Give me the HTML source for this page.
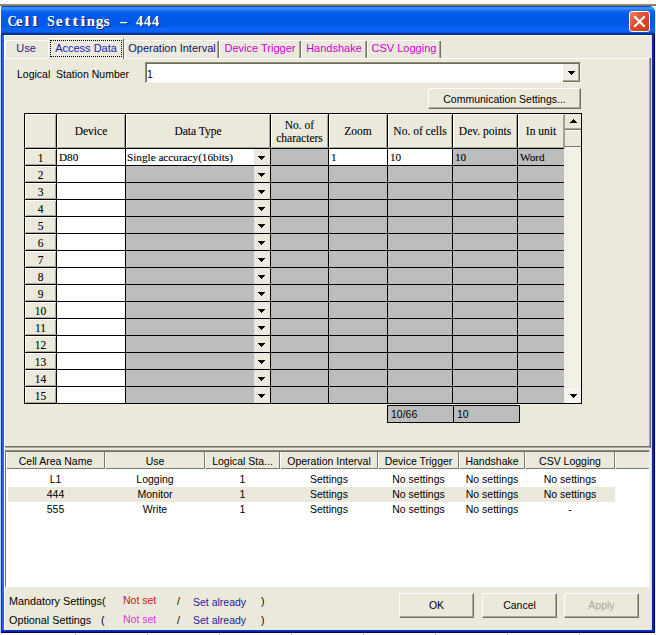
<!DOCTYPE html>
<html><head><meta charset="utf-8"><style>
*{margin:0;padding:0;box-sizing:border-box}
html,body{width:656px;height:635px;overflow:hidden;background:#fbfaf6;position:relative}
body{font-family:"Liberation Sans",sans-serif;font-size:10.5px;color:#000;line-height:1}
.a{position:absolute}
.t{white-space:pre;line-height:12px}
.sf{font-family:"Liberation Serif",serif;font-size:11.5px;-webkit-text-stroke:0.1px #000}
.c{text-align:center}
.tri,.trup{position:absolute;width:7px;height:4px}
.tri{background:linear-gradient(#000,#000) 0 0/7px 1px no-repeat,linear-gradient(#000,#000) 1px 1px/5px 1px no-repeat,linear-gradient(#000,#000) 2px 2px/3px 1px no-repeat,linear-gradient(#000,#000) 3px 3px/1px 1px no-repeat}
.trup{background:linear-gradient(#000,#000) 0 3px/7px 1px no-repeat,linear-gradient(#000,#000) 1px 2px/5px 1px no-repeat,linear-gradient(#000,#000) 2px 1px/3px 1px no-repeat,linear-gradient(#000,#000) 3px 0/1px 1px no-repeat}
</style></head><body>
<div class="a " style="left:0px;top:0px;width:656px;height:4px;background:#fdfbfd"></div>
<div class="a " style="left:0px;top:4px;width:656px;height:2px;background:linear-gradient(#a39680,#7c7058)"></div>
<div class="a " style="left:1px;top:6px;width:654px;height:627px;background:#1e62ff;border-radius:2px 6px 0 0"></div>
<div class="a " style="left:1px;top:6px;width:654px;height:29px;border-radius:2px 6px 0 0;background:linear-gradient(#0b45c8 0,#0b45c8 1px,#3d95ff 1px,#3a8efc 3px,#1c74f4 4px,#0660ec 7px,#005ae8 11px,#0058e6 20px,#0864f6 22px,#0a62f2 26px,#0840b8 27px,#0a2a80 28px,#0a2a80 29px)"></div>
<div class="a " style="left:0px;top:35px;width:1px;height:598px;background:#c0d4ff"></div>
<div class="a " style="left:1px;top:35px;width:1px;height:596px;background:#0a3aa8"></div>
<div class="a " style="left:651px;top:35px;width:1px;height:595px;background:#d8def4"></div>
<div class="a " style="left:652px;top:35px;width:2px;height:597px;background:#0a2aa0"></div>
<div class="a " style="left:654px;top:35px;width:1px;height:598px;background:#000060"></div>
<div class="a " style="left:655px;top:6px;width:1px;height:629px;background:#f8f0ff"></div>
<div class="a " style="left:1px;top:630px;width:654px;height:2px;background:linear-gradient(#0838d8,#0020a0)"></div>
<div class="a " style="left:1px;top:632px;width:654px;height:1px;background:#000050"></div>
<div class="a " style="left:0px;top:633px;width:656px;height:2px;background:#fdfdfd"></div>
<div class="a" style="left:7px;top:14px;white-space:nowrap;font-family:'Liberation Serif',serif;font-weight:bold;font-size:14px;line-height:16px;color:#fff;text-shadow:1px 1px 0 #0b2a8a"><span style="display:inline-block;width:8px;text-align:center"><span style="display:inline-block;transform:scaleX(0.92)">C</span></span><span style="display:inline-block;width:8px;text-align:center"><span style="display:inline-block;transform:scaleX(1.1)">e</span></span><span style="display:inline-block;width:8px;text-align:center"><span style="display:inline-block;transform:scaleX(1.35)">l</span></span><span style="display:inline-block;width:8px;text-align:center"><span style="display:inline-block;transform:scaleX(1.35)">l</span></span><span style="display:inline-block;width:8px;text-align:center"><span style="display:inline-block;transform:scaleX(1.1)">&nbsp;</span></span><span style="display:inline-block;width:8px;text-align:center"><span style="display:inline-block;transform:scaleX(1.0)">S</span></span><span style="display:inline-block;width:8px;text-align:center"><span style="display:inline-block;transform:scaleX(1.1)">e</span></span><span style="display:inline-block;width:8px;text-align:center"><span style="display:inline-block;transform:scaleX(1.3)">t</span></span><span style="display:inline-block;width:8px;text-align:center"><span style="display:inline-block;transform:scaleX(1.3)">t</span></span><span style="display:inline-block;width:8px;text-align:center"><span style="display:inline-block;transform:scaleX(1.35)">i</span></span><span style="display:inline-block;width:8px;text-align:center"><span style="display:inline-block;transform:scaleX(1.05)">n</span></span><span style="display:inline-block;width:8px;text-align:center"><span style="display:inline-block;transform:scaleX(1.1)">g</span></span><span style="display:inline-block;width:8px;text-align:center"><span style="display:inline-block;transform:scaleX(1.15)">s</span></span><span style="display:inline-block;width:8px;text-align:center"><span style="display:inline-block;transform:scaleX(1.1)">&nbsp;</span></span><span style="display:inline-block;width:8px;text-align:center"><span style="display:inline-block;transform:scaleX(1.9)">-</span></span><span style="display:inline-block;width:8px;text-align:center"><span style="display:inline-block;transform:scaleX(1.1)">&nbsp;</span></span><span style="display:inline-block;width:8px;text-align:center"><span style="display:inline-block;transform:scaleX(1.05)">4</span></span><span style="display:inline-block;width:8px;text-align:center"><span style="display:inline-block;transform:scaleX(1.05)">4</span></span><span style="display:inline-block;width:8px;text-align:center"><span style="display:inline-block;transform:scaleX(1.05)">4</span></span></div>
<div class="a " style="left:629px;top:11px;width:21px;height:21px;border:1px solid #fff;border-radius:3px;background:linear-gradient(135deg,#f08060,#e04c2c 45%,#c83c1a)"></div>
<svg class="a" style="left:629px;top:11px" width="21" height="21"><path d="M6 6L15 15M15 6L6 15" stroke="#fff" stroke-width="2.2" stroke-linecap="square"/></svg>
<div class="a " style="left:4px;top:35px;width:647px;height:595px;background:#ebe9db"></div>
<div class="a " style="left:4px;top:35px;width:647px;height:1px;background:#fff"></div>
<div class="a " style="left:4px;top:35px;width:1px;height:595px;background:#fff"></div>
<div class="a " style="left:4px;top:58px;width:646px;height:1px;background:#fff"></div>
<div class="a " style="left:649px;top:58px;width:1px;height:389px;background:#aca899"></div>
<div class="a " style="left:650px;top:58px;width:1px;height:390px;background:#716f64"></div>
<div class="a " style="left:5px;top:446px;width:645px;height:1px;background:#716f64"></div>
<div class="a " style="left:5px;top:447px;width:645px;height:1px;background:#aca899"></div>
<div class="a " style="left:5px;top:40px;width:42px;height:18px;border-left:1px solid #fff;border-top:1px solid #fff"></div>
<div class="a t c" style="left:5px;top:42px;width:42px;color:#1c1c8c;font-size:11px">Use</div>
<div class="a " style="left:48px;top:38px;width:76px;height:21px;background:#ebe9db;border-left:1px solid #fff;border-top:1px solid #fff;border-right:1px solid #716f64"></div>
<div class="a " style="left:50px;top:40px;width:72px;height:17px;border:1px dotted #000"></div>
<div class="a t c" style="left:48px;top:42px;width:76px;color:#2020b0;font-size:11px">Access Data</div>
<div class="a " style="left:125px;top:40px;width:94px;height:18px;border-left:1px solid #fff;border-top:1px solid #fff"></div>
<div class="a " style="left:217px;top:41px;width:1px;height:17px;background:#aca899"></div>
<div class="a " style="left:218px;top:41px;width:1px;height:17px;background:#716f64"></div>
<div class="a t c" style="left:125px;top:42px;width:94px;color:#101070;font-size:11px">Operation Interval</div>
<div class="a " style="left:219px;top:40px;width:82px;height:18px;border-left:1px solid #fff;border-top:1px solid #fff"></div>
<div class="a " style="left:299px;top:41px;width:1px;height:17px;background:#aca899"></div>
<div class="a " style="left:300px;top:41px;width:1px;height:17px;background:#716f64"></div>
<div class="a t c" style="left:219px;top:42px;width:82px;color:#d000d0;font-size:11px">Device Trigger</div>
<div class="a " style="left:301px;top:40px;width:66px;height:18px;border-left:1px solid #fff;border-top:1px solid #fff"></div>
<div class="a " style="left:365px;top:41px;width:1px;height:17px;background:#aca899"></div>
<div class="a " style="left:366px;top:41px;width:1px;height:17px;background:#716f64"></div>
<div class="a t c" style="left:301px;top:42px;width:66px;color:#d000d0;font-size:11px">Handshake</div>
<div class="a " style="left:367px;top:40px;width:74px;height:18px;border-left:1px solid #fff;border-top:1px solid #fff"></div>
<div class="a " style="left:439px;top:41px;width:1px;height:17px;background:#aca899"></div>
<div class="a " style="left:440px;top:41px;width:1px;height:17px;background:#716f64"></div>
<div class="a t c" style="left:367px;top:42px;width:74px;color:#d000d0;font-size:11px">CSV Logging</div>
<div class="a t " style="left:17px;top:68px;">Logical  Station Number</div>
<div class="a " style="left:145px;top:62px;width:436px;height:21px;background:#fff;border-left:1px solid #8d8a7d;border-top:1px solid #8d8a7d;border-right:1px solid #f4f2ea;border-bottom:1px solid #f4f2ea"></div>
<div class="a " style="left:146px;top:63px;width:434px;height:1px;background:#6f6c60"></div>
<div class="a " style="left:146px;top:63px;width:1px;height:19px;background:#6f6c60"></div>
<div class="a t " style="left:147px;top:68px;">1</div>
<div class="a " style="left:563px;top:64px;width:17px;height:18px;background:#f0eee4;border-right:1px solid #716f64;border-bottom:1px solid #716f64;box-shadow:inset -1px -1px 0 #aca899"></div>
<div class="tri" style="left:568px;top:71px"></div>
<div class="a " style="left:428px;top:88px;width:153px;height:21px;background:#ebe9db;border-left:1px solid #fff;border-top:1px solid #fff;border-right:1px solid #716f64;border-bottom:1px solid #716f64;box-shadow:inset -1px -1px 0 #aca899"></div>
<div class="a t c" style="left:428px;top:93px;width:153px">Communication Settings...</div>
<div class="a " style="left:24px;top:113px;width:558px;height:291px;background:#000"></div>
<div class="a " style="left:25px;top:114px;width:31px;height:34px;background:#ebe9db;box-shadow:inset 1px 1px 0 #fff,inset -1px -1px 0 #aca899"></div>
<div class="a " style="left:57px;top:114px;width:68px;height:34px;background:#ebe9db;box-shadow:inset 1px 1px 0 #fff,inset -1px -1px 0 #aca899"></div>
<div class="a sf c" style="left:57px;top:125px;width:68px;line-height:13px">Device</div>
<div class="a " style="left:126px;top:114px;width:144px;height:34px;background:#ebe9db;box-shadow:inset 1px 1px 0 #fff,inset -1px -1px 0 #aca899"></div>
<div class="a sf c" style="left:126px;top:125px;width:144px;line-height:13px">Data Type</div>
<div class="a " style="left:271px;top:114px;width:57px;height:34px;background:#ebe9db;box-shadow:inset 1px 1px 0 #fff,inset -1px -1px 0 #aca899"></div>
<div class="a sf c" style="left:271px;top:119px;width:57px;line-height:13px">No. of<br>characters</div>
<div class="a " style="left:329px;top:114px;width:58px;height:34px;background:#ebe9db;box-shadow:inset 1px 1px 0 #fff,inset -1px -1px 0 #aca899"></div>
<div class="a sf c" style="left:329px;top:125px;width:58px;line-height:13px">Zoom</div>
<div class="a " style="left:388px;top:114px;width:64px;height:34px;background:#ebe9db;box-shadow:inset 1px 1px 0 #fff,inset -1px -1px 0 #aca899"></div>
<div class="a sf c" style="left:388px;top:125px;width:64px;line-height:13px">No. of cells</div>
<div class="a " style="left:453px;top:114px;width:64px;height:34px;background:#ebe9db;box-shadow:inset 1px 1px 0 #fff,inset -1px -1px 0 #aca899"></div>
<div class="a sf c" style="left:453px;top:125px;width:64px;line-height:13px">Dev. points</div>
<div class="a " style="left:518px;top:114px;width:46px;height:34px;background:#ebe9db;box-shadow:inset 1px 1px 0 #fff,inset -1px -1px 0 #aca899"></div>
<div class="a sf c" style="left:518px;top:125px;width:46px;line-height:13px">In unit</div>
<div class="a " style="left:25px;top:149px;width:31px;height:16px;background:#ebe9db;box-shadow:inset 1px 1px 0 #fff,inset -1px -1px 0 #aca899"></div>
<div class="a sf c" style="left:25px;top:152px;width:31px;line-height:13px">1</div>
<div class="a " style="left:57px;top:149px;width:68px;height:16px;background:#fff"></div>
<div class="a " style="left:126px;top:149px;width:144px;height:16px;background:#fff"></div>
<div class="a " style="left:254px;top:149px;width:16px;height:16px;background:#ebe9db"></div>
<div class="tri" style="left:258px;top:156px"></div>
<div class="a " style="left:271px;top:149px;width:57px;height:16px;background:#bdbdbd"></div>
<div class="a " style="left:329px;top:149px;width:58px;height:16px;background:#fff"></div>
<div class="a " style="left:388px;top:149px;width:64px;height:16px;background:#fff"></div>
<div class="a " style="left:453px;top:149px;width:64px;height:16px;background:#bdbdbd"></div>
<div class="a " style="left:518px;top:149px;width:46px;height:16px;background:#bdbdbd"></div>
<div class="a sf t" style="left:59px;top:151px;line-height:13px;font-size:11.2px">D80</div>
<div class="a sf t" style="left:127px;top:151px;line-height:13px;font-size:11.2px">Single accuracy(16bits)</div>
<div class="a sf t" style="left:331px;top:151px;line-height:13px;font-size:11.2px">1</div>
<div class="a sf t" style="left:390px;top:151px;line-height:13px;font-size:11.2px">10</div>
<div class="a sf t" style="left:455px;top:151px;line-height:13px;font-size:11.2px">10</div>
<div class="a sf t" style="left:520px;top:151px;line-height:13px;font-size:11.2px">Word</div>
<div class="a " style="left:25px;top:166px;width:31px;height:16px;background:#ebe9db;box-shadow:inset 1px 1px 0 #fff,inset -1px -1px 0 #aca899"></div>
<div class="a sf c" style="left:25px;top:169px;width:31px;line-height:13px">2</div>
<div class="a " style="left:57px;top:166px;width:68px;height:16px;background:#fff"></div>
<div class="a " style="left:126px;top:166px;width:144px;height:16px;background:#bdbdbd"></div>
<div class="a " style="left:254px;top:166px;width:16px;height:16px;background:#ebe9db"></div>
<div class="tri" style="left:258px;top:173px"></div>
<div class="a " style="left:271px;top:166px;width:57px;height:16px;background:#bdbdbd"></div>
<div class="a " style="left:329px;top:166px;width:58px;height:16px;background:#bdbdbd"></div>
<div class="a " style="left:388px;top:166px;width:64px;height:16px;background:#bdbdbd"></div>
<div class="a " style="left:453px;top:166px;width:64px;height:16px;background:#bdbdbd"></div>
<div class="a " style="left:518px;top:166px;width:46px;height:16px;background:#bdbdbd"></div>
<div class="a " style="left:25px;top:183px;width:31px;height:16px;background:#ebe9db;box-shadow:inset 1px 1px 0 #fff,inset -1px -1px 0 #aca899"></div>
<div class="a sf c" style="left:25px;top:186px;width:31px;line-height:13px">3</div>
<div class="a " style="left:57px;top:183px;width:68px;height:16px;background:#fff"></div>
<div class="a " style="left:126px;top:183px;width:144px;height:16px;background:#bdbdbd"></div>
<div class="a " style="left:254px;top:183px;width:16px;height:16px;background:#ebe9db"></div>
<div class="tri" style="left:258px;top:190px"></div>
<div class="a " style="left:271px;top:183px;width:57px;height:16px;background:#bdbdbd"></div>
<div class="a " style="left:329px;top:183px;width:58px;height:16px;background:#bdbdbd"></div>
<div class="a " style="left:388px;top:183px;width:64px;height:16px;background:#bdbdbd"></div>
<div class="a " style="left:453px;top:183px;width:64px;height:16px;background:#bdbdbd"></div>
<div class="a " style="left:518px;top:183px;width:46px;height:16px;background:#bdbdbd"></div>
<div class="a " style="left:25px;top:200px;width:31px;height:16px;background:#ebe9db;box-shadow:inset 1px 1px 0 #fff,inset -1px -1px 0 #aca899"></div>
<div class="a sf c" style="left:25px;top:203px;width:31px;line-height:13px">4</div>
<div class="a " style="left:57px;top:200px;width:68px;height:16px;background:#fff"></div>
<div class="a " style="left:126px;top:200px;width:144px;height:16px;background:#bdbdbd"></div>
<div class="a " style="left:254px;top:200px;width:16px;height:16px;background:#ebe9db"></div>
<div class="tri" style="left:258px;top:207px"></div>
<div class="a " style="left:271px;top:200px;width:57px;height:16px;background:#bdbdbd"></div>
<div class="a " style="left:329px;top:200px;width:58px;height:16px;background:#bdbdbd"></div>
<div class="a " style="left:388px;top:200px;width:64px;height:16px;background:#bdbdbd"></div>
<div class="a " style="left:453px;top:200px;width:64px;height:16px;background:#bdbdbd"></div>
<div class="a " style="left:518px;top:200px;width:46px;height:16px;background:#bdbdbd"></div>
<div class="a " style="left:25px;top:217px;width:31px;height:16px;background:#ebe9db;box-shadow:inset 1px 1px 0 #fff,inset -1px -1px 0 #aca899"></div>
<div class="a sf c" style="left:25px;top:220px;width:31px;line-height:13px">5</div>
<div class="a " style="left:57px;top:217px;width:68px;height:16px;background:#fff"></div>
<div class="a " style="left:126px;top:217px;width:144px;height:16px;background:#bdbdbd"></div>
<div class="a " style="left:254px;top:217px;width:16px;height:16px;background:#ebe9db"></div>
<div class="tri" style="left:258px;top:224px"></div>
<div class="a " style="left:271px;top:217px;width:57px;height:16px;background:#bdbdbd"></div>
<div class="a " style="left:329px;top:217px;width:58px;height:16px;background:#bdbdbd"></div>
<div class="a " style="left:388px;top:217px;width:64px;height:16px;background:#bdbdbd"></div>
<div class="a " style="left:453px;top:217px;width:64px;height:16px;background:#bdbdbd"></div>
<div class="a " style="left:518px;top:217px;width:46px;height:16px;background:#bdbdbd"></div>
<div class="a " style="left:25px;top:234px;width:31px;height:16px;background:#ebe9db;box-shadow:inset 1px 1px 0 #fff,inset -1px -1px 0 #aca899"></div>
<div class="a sf c" style="left:25px;top:237px;width:31px;line-height:13px">6</div>
<div class="a " style="left:57px;top:234px;width:68px;height:16px;background:#fff"></div>
<div class="a " style="left:126px;top:234px;width:144px;height:16px;background:#bdbdbd"></div>
<div class="a " style="left:254px;top:234px;width:16px;height:16px;background:#ebe9db"></div>
<div class="tri" style="left:258px;top:241px"></div>
<div class="a " style="left:271px;top:234px;width:57px;height:16px;background:#bdbdbd"></div>
<div class="a " style="left:329px;top:234px;width:58px;height:16px;background:#bdbdbd"></div>
<div class="a " style="left:388px;top:234px;width:64px;height:16px;background:#bdbdbd"></div>
<div class="a " style="left:453px;top:234px;width:64px;height:16px;background:#bdbdbd"></div>
<div class="a " style="left:518px;top:234px;width:46px;height:16px;background:#bdbdbd"></div>
<div class="a " style="left:25px;top:251px;width:31px;height:16px;background:#ebe9db;box-shadow:inset 1px 1px 0 #fff,inset -1px -1px 0 #aca899"></div>
<div class="a sf c" style="left:25px;top:254px;width:31px;line-height:13px">7</div>
<div class="a " style="left:57px;top:251px;width:68px;height:16px;background:#fff"></div>
<div class="a " style="left:126px;top:251px;width:144px;height:16px;background:#bdbdbd"></div>
<div class="a " style="left:254px;top:251px;width:16px;height:16px;background:#ebe9db"></div>
<div class="tri" style="left:258px;top:258px"></div>
<div class="a " style="left:271px;top:251px;width:57px;height:16px;background:#bdbdbd"></div>
<div class="a " style="left:329px;top:251px;width:58px;height:16px;background:#bdbdbd"></div>
<div class="a " style="left:388px;top:251px;width:64px;height:16px;background:#bdbdbd"></div>
<div class="a " style="left:453px;top:251px;width:64px;height:16px;background:#bdbdbd"></div>
<div class="a " style="left:518px;top:251px;width:46px;height:16px;background:#bdbdbd"></div>
<div class="a " style="left:25px;top:268px;width:31px;height:16px;background:#ebe9db;box-shadow:inset 1px 1px 0 #fff,inset -1px -1px 0 #aca899"></div>
<div class="a sf c" style="left:25px;top:271px;width:31px;line-height:13px">8</div>
<div class="a " style="left:57px;top:268px;width:68px;height:16px;background:#fff"></div>
<div class="a " style="left:126px;top:268px;width:144px;height:16px;background:#bdbdbd"></div>
<div class="a " style="left:254px;top:268px;width:16px;height:16px;background:#ebe9db"></div>
<div class="tri" style="left:258px;top:275px"></div>
<div class="a " style="left:271px;top:268px;width:57px;height:16px;background:#bdbdbd"></div>
<div class="a " style="left:329px;top:268px;width:58px;height:16px;background:#bdbdbd"></div>
<div class="a " style="left:388px;top:268px;width:64px;height:16px;background:#bdbdbd"></div>
<div class="a " style="left:453px;top:268px;width:64px;height:16px;background:#bdbdbd"></div>
<div class="a " style="left:518px;top:268px;width:46px;height:16px;background:#bdbdbd"></div>
<div class="a " style="left:25px;top:285px;width:31px;height:16px;background:#ebe9db;box-shadow:inset 1px 1px 0 #fff,inset -1px -1px 0 #aca899"></div>
<div class="a sf c" style="left:25px;top:288px;width:31px;line-height:13px">9</div>
<div class="a " style="left:57px;top:285px;width:68px;height:16px;background:#fff"></div>
<div class="a " style="left:126px;top:285px;width:144px;height:16px;background:#bdbdbd"></div>
<div class="a " style="left:254px;top:285px;width:16px;height:16px;background:#ebe9db"></div>
<div class="tri" style="left:258px;top:292px"></div>
<div class="a " style="left:271px;top:285px;width:57px;height:16px;background:#bdbdbd"></div>
<div class="a " style="left:329px;top:285px;width:58px;height:16px;background:#bdbdbd"></div>
<div class="a " style="left:388px;top:285px;width:64px;height:16px;background:#bdbdbd"></div>
<div class="a " style="left:453px;top:285px;width:64px;height:16px;background:#bdbdbd"></div>
<div class="a " style="left:518px;top:285px;width:46px;height:16px;background:#bdbdbd"></div>
<div class="a " style="left:25px;top:302px;width:31px;height:16px;background:#ebe9db;box-shadow:inset 1px 1px 0 #fff,inset -1px -1px 0 #aca899"></div>
<div class="a sf c" style="left:25px;top:305px;width:31px;line-height:13px">10</div>
<div class="a " style="left:57px;top:302px;width:68px;height:16px;background:#fff"></div>
<div class="a " style="left:126px;top:302px;width:144px;height:16px;background:#bdbdbd"></div>
<div class="a " style="left:254px;top:302px;width:16px;height:16px;background:#ebe9db"></div>
<div class="tri" style="left:258px;top:309px"></div>
<div class="a " style="left:271px;top:302px;width:57px;height:16px;background:#bdbdbd"></div>
<div class="a " style="left:329px;top:302px;width:58px;height:16px;background:#bdbdbd"></div>
<div class="a " style="left:388px;top:302px;width:64px;height:16px;background:#bdbdbd"></div>
<div class="a " style="left:453px;top:302px;width:64px;height:16px;background:#bdbdbd"></div>
<div class="a " style="left:518px;top:302px;width:46px;height:16px;background:#bdbdbd"></div>
<div class="a " style="left:25px;top:319px;width:31px;height:16px;background:#ebe9db;box-shadow:inset 1px 1px 0 #fff,inset -1px -1px 0 #aca899"></div>
<div class="a sf c" style="left:25px;top:322px;width:31px;line-height:13px">11</div>
<div class="a " style="left:57px;top:319px;width:68px;height:16px;background:#fff"></div>
<div class="a " style="left:126px;top:319px;width:144px;height:16px;background:#bdbdbd"></div>
<div class="a " style="left:254px;top:319px;width:16px;height:16px;background:#ebe9db"></div>
<div class="tri" style="left:258px;top:326px"></div>
<div class="a " style="left:271px;top:319px;width:57px;height:16px;background:#bdbdbd"></div>
<div class="a " style="left:329px;top:319px;width:58px;height:16px;background:#bdbdbd"></div>
<div class="a " style="left:388px;top:319px;width:64px;height:16px;background:#bdbdbd"></div>
<div class="a " style="left:453px;top:319px;width:64px;height:16px;background:#bdbdbd"></div>
<div class="a " style="left:518px;top:319px;width:46px;height:16px;background:#bdbdbd"></div>
<div class="a " style="left:25px;top:336px;width:31px;height:16px;background:#ebe9db;box-shadow:inset 1px 1px 0 #fff,inset -1px -1px 0 #aca899"></div>
<div class="a sf c" style="left:25px;top:339px;width:31px;line-height:13px">12</div>
<div class="a " style="left:57px;top:336px;width:68px;height:16px;background:#fff"></div>
<div class="a " style="left:126px;top:336px;width:144px;height:16px;background:#bdbdbd"></div>
<div class="a " style="left:254px;top:336px;width:16px;height:16px;background:#ebe9db"></div>
<div class="tri" style="left:258px;top:343px"></div>
<div class="a " style="left:271px;top:336px;width:57px;height:16px;background:#bdbdbd"></div>
<div class="a " style="left:329px;top:336px;width:58px;height:16px;background:#bdbdbd"></div>
<div class="a " style="left:388px;top:336px;width:64px;height:16px;background:#bdbdbd"></div>
<div class="a " style="left:453px;top:336px;width:64px;height:16px;background:#bdbdbd"></div>
<div class="a " style="left:518px;top:336px;width:46px;height:16px;background:#bdbdbd"></div>
<div class="a " style="left:25px;top:353px;width:31px;height:16px;background:#ebe9db;box-shadow:inset 1px 1px 0 #fff,inset -1px -1px 0 #aca899"></div>
<div class="a sf c" style="left:25px;top:356px;width:31px;line-height:13px">13</div>
<div class="a " style="left:57px;top:353px;width:68px;height:16px;background:#fff"></div>
<div class="a " style="left:126px;top:353px;width:144px;height:16px;background:#bdbdbd"></div>
<div class="a " style="left:254px;top:353px;width:16px;height:16px;background:#ebe9db"></div>
<div class="tri" style="left:258px;top:360px"></div>
<div class="a " style="left:271px;top:353px;width:57px;height:16px;background:#bdbdbd"></div>
<div class="a " style="left:329px;top:353px;width:58px;height:16px;background:#bdbdbd"></div>
<div class="a " style="left:388px;top:353px;width:64px;height:16px;background:#bdbdbd"></div>
<div class="a " style="left:453px;top:353px;width:64px;height:16px;background:#bdbdbd"></div>
<div class="a " style="left:518px;top:353px;width:46px;height:16px;background:#bdbdbd"></div>
<div class="a " style="left:25px;top:370px;width:31px;height:16px;background:#ebe9db;box-shadow:inset 1px 1px 0 #fff,inset -1px -1px 0 #aca899"></div>
<div class="a sf c" style="left:25px;top:373px;width:31px;line-height:13px">14</div>
<div class="a " style="left:57px;top:370px;width:68px;height:16px;background:#fff"></div>
<div class="a " style="left:126px;top:370px;width:144px;height:16px;background:#bdbdbd"></div>
<div class="a " style="left:254px;top:370px;width:16px;height:16px;background:#ebe9db"></div>
<div class="tri" style="left:258px;top:377px"></div>
<div class="a " style="left:271px;top:370px;width:57px;height:16px;background:#bdbdbd"></div>
<div class="a " style="left:329px;top:370px;width:58px;height:16px;background:#bdbdbd"></div>
<div class="a " style="left:388px;top:370px;width:64px;height:16px;background:#bdbdbd"></div>
<div class="a " style="left:453px;top:370px;width:64px;height:16px;background:#bdbdbd"></div>
<div class="a " style="left:518px;top:370px;width:46px;height:16px;background:#bdbdbd"></div>
<div class="a " style="left:25px;top:387px;width:31px;height:16px;background:#ebe9db;box-shadow:inset 1px 1px 0 #fff,inset -1px -1px 0 #aca899"></div>
<div class="a sf c" style="left:25px;top:390px;width:31px;line-height:13px">15</div>
<div class="a " style="left:57px;top:387px;width:68px;height:16px;background:#fff"></div>
<div class="a " style="left:126px;top:387px;width:144px;height:16px;background:#bdbdbd"></div>
<div class="a " style="left:254px;top:387px;width:16px;height:16px;background:#ebe9db"></div>
<div class="tri" style="left:258px;top:394px"></div>
<div class="a " style="left:271px;top:387px;width:57px;height:16px;background:#bdbdbd"></div>
<div class="a " style="left:329px;top:387px;width:58px;height:16px;background:#bdbdbd"></div>
<div class="a " style="left:388px;top:387px;width:64px;height:16px;background:#bdbdbd"></div>
<div class="a " style="left:453px;top:387px;width:64px;height:16px;background:#bdbdbd"></div>
<div class="a " style="left:518px;top:387px;width:46px;height:16px;background:#bdbdbd"></div>
<div class="a " style="left:564px;top:114px;width:17px;height:289px;background-color:#f4f3ee;background-image:repeating-conic-gradient(#fbfaf6 0 25%,#e9e6d6 0 50%);background-size:2px 2px"></div>
<div class="a " style="left:564px;top:114px;width:1px;height:34px;background:#9c998c"></div>
<div class="a " style="left:565px;top:114px;width:16px;height:15px;background:#ebe9db"></div>
<div class="a " style="left:565px;top:128px;width:16px;height:1px;background:#aca899"></div>
<div class="a " style="left:565px;top:129px;width:16px;height:1px;background:#7d7a6d"></div>
<div class="trup" style="left:570px;top:119px"></div>
<div class="a " style="left:565px;top:130px;width:16px;height:17px;background:#ebe9db;box-shadow:inset 0 1px 0 #fff,inset 0 -1px 0 #7d7a6d"></div>
<div class="a " style="left:565px;top:388px;width:16px;height:15px;background:#f6f5f0"></div>
<div class="tri" style="left:570px;top:394px"></div>
<div class="a " style="left:387px;top:405px;width:133px;height:18px;background:#000"></div>
<div class="a " style="left:388px;top:406px;width:65px;height:16px;background:#bdbdbd"></div>
<div class="a " style="left:454px;top:406px;width:65px;height:16px;background:#bdbdbd"></div>
<div class="a t " style="left:391px;top:408px;font-size:10.5px">10/66</div>
<div class="a t " style="left:457px;top:408px;font-size:10.5px">10</div>
<div class="a " style="left:5px;top:450px;width:645px;height:137px;background:#fff;border-left:1px solid #716f64;border-top:1px solid #8d8a7d;border-right:1px solid #f4f2ea;border-bottom:1px solid #fff"></div>
<div class="a " style="left:6px;top:451px;width:643px;height:1px;background:#716f64"></div>
<div class="a " style="left:6px;top:452px;width:99px;height:17px;background:#ebe9db;box-shadow:inset 1px 0 0 #fff,inset -1px -1px 0 #7d7a6d"></div>
<div class="a t c" style="left:6px;top:455px;width:99px">Cell Area Name</div>
<div class="a " style="left:105px;top:452px;width:100px;height:17px;background:#ebe9db;box-shadow:inset 1px 0 0 #fff,inset -1px -1px 0 #7d7a6d"></div>
<div class="a t c" style="left:105px;top:455px;width:100px">Use</div>
<div class="a " style="left:205px;top:452px;width:75px;height:17px;background:#ebe9db;box-shadow:inset 1px 0 0 #fff,inset -1px -1px 0 #7d7a6d"></div>
<div class="a t c" style="left:205px;top:455px;width:75px">Logical Sta...</div>
<div class="a " style="left:280px;top:452px;width:98px;height:17px;background:#ebe9db;box-shadow:inset 1px 0 0 #fff,inset -1px -1px 0 #7d7a6d"></div>
<div class="a t c" style="left:280px;top:455px;width:98px">Operation Interval</div>
<div class="a " style="left:378px;top:452px;width:81px;height:17px;background:#ebe9db;box-shadow:inset 1px 0 0 #fff,inset -1px -1px 0 #7d7a6d"></div>
<div class="a t c" style="left:378px;top:455px;width:81px">Device Trigger</div>
<div class="a " style="left:459px;top:452px;width:66px;height:17px;background:#ebe9db;box-shadow:inset 1px 0 0 #fff,inset -1px -1px 0 #7d7a6d"></div>
<div class="a t c" style="left:459px;top:455px;width:66px">Handshake</div>
<div class="a " style="left:525px;top:452px;width:90px;height:17px;background:#ebe9db;box-shadow:inset 1px 0 0 #fff,inset -1px -1px 0 #7d7a6d"></div>
<div class="a t c" style="left:525px;top:455px;width:90px">CSV Logging</div>
<div class="a " style="left:615px;top:452px;width:34px;height:17px;background:#ebe9db;box-shadow:inset 1px 0 0 #fff,inset 0px -1px 0 #7d7a6d"></div>
<div class="a t c" style="left:6px;top:473px;width:99px">L1</div>
<div class="a t c" style="left:105px;top:473px;width:100px">Logging</div>
<div class="a t c" style="left:205px;top:473px;width:75px">1</div>
<div class="a t c" style="left:280px;top:473px;width:98px">Settings</div>
<div class="a t c" style="left:378px;top:473px;width:81px">No settings</div>
<div class="a t c" style="left:459px;top:473px;width:66px">No settings</div>
<div class="a t c" style="left:525px;top:473px;width:90px">No settings</div>
<div class="a " style="left:8px;top:487px;width:607px;height:15px;background:#ebe9db"></div>
<div class="a t c" style="left:6px;top:488px;width:99px">444</div>
<div class="a t c" style="left:105px;top:488px;width:100px">Monitor</div>
<div class="a t c" style="left:205px;top:488px;width:75px">1</div>
<div class="a t c" style="left:280px;top:488px;width:98px">Settings</div>
<div class="a t c" style="left:378px;top:488px;width:81px">No settings</div>
<div class="a t c" style="left:459px;top:488px;width:66px">No settings</div>
<div class="a t c" style="left:525px;top:488px;width:90px">No settings</div>
<div class="a t c" style="left:6px;top:503px;width:99px">555</div>
<div class="a t c" style="left:105px;top:503px;width:100px">Write</div>
<div class="a t c" style="left:205px;top:503px;width:75px">1</div>
<div class="a t c" style="left:280px;top:503px;width:98px">Settings</div>
<div class="a t c" style="left:378px;top:503px;width:81px">No settings</div>
<div class="a t c" style="left:459px;top:503px;width:66px">No settings</div>
<div class="a t c" style="left:525px;top:503px;width:90px">-</div>
<div class="a t " style="left:9px;top:595px;font-size:10.8px">Mandatory Settings(</div>
<div class="a t " style="left:9px;top:614px;font-size:10.8px">Optional Settings</div>
<div class="a t " style="left:101px;top:614px;">(</div>
<div class="a t " style="left:123px;top:594px;color:#c41a1a">Not set</div>
<div class="a t " style="left:123px;top:613px;color:#d838d8">Not set</div>
<div class="a t " style="left:177px;top:595px;">/</div>
<div class="a t " style="left:177px;top:614px;">/</div>
<div class="a t " style="left:193px;top:596px;color:#1c1c9a">Set already</div>
<div class="a t " style="left:193px;top:614px;color:#1c1c9a">Set already</div>
<div class="a t " style="left:261px;top:595px;">)</div>
<div class="a t " style="left:261px;top:614px;">)</div>
<div class="a " style="left:75px;top:633px;width:1px;height:2px;background:#c4c4c4"></div>
<div class="a " style="left:147px;top:633px;width:1px;height:2px;background:#c4c4c4"></div>
<div class="a " style="left:219px;top:633px;width:1px;height:2px;background:#c4c4c4"></div>
<div class="a " style="left:291px;top:633px;width:1px;height:2px;background:#c4c4c4"></div>
<div class="a " style="left:363px;top:633px;width:1px;height:2px;background:#c4c4c4"></div>
<div class="a " style="left:435px;top:633px;width:1px;height:2px;background:#c4c4c4"></div>
<div class="a " style="left:507px;top:633px;width:1px;height:2px;background:#c4c4c4"></div>
<div class="a " style="left:579px;top:633px;width:1px;height:2px;background:#c4c4c4"></div>
<div class="a " style="left:399px;top:593px;width:75px;height:25px;background:#ebe9db;border-left:1px solid #fff;border-top:1px solid #fff;border-right:1px solid #716f64;border-bottom:1px solid #716f64;box-shadow:inset -1px -1px 0 #aca899"></div>
<div class="a t c" style="left:399px;top:599px;width:75px;color:#000">OK</div>
<div class="a " style="left:482px;top:593px;width:75px;height:25px;background:#ebe9db;border-left:1px solid #fff;border-top:1px solid #fff;border-right:1px solid #716f64;border-bottom:1px solid #716f64;box-shadow:inset -1px -1px 0 #aca899"></div>
<div class="a t c" style="left:482px;top:599px;width:75px;color:#000">Cancel</div>
<div class="a " style="left:564px;top:593px;width:75px;height:25px;background:#ebe9db;border-left:1px solid #fff;border-top:1px solid #fff;border-right:1px solid #716f64;border-bottom:1px solid #716f64;box-shadow:inset -1px -1px 0 #aca899"></div>
<div class="a t c" style="left:564px;top:599px;width:75px;color:#aca899">Apply</div>
</body></html>
